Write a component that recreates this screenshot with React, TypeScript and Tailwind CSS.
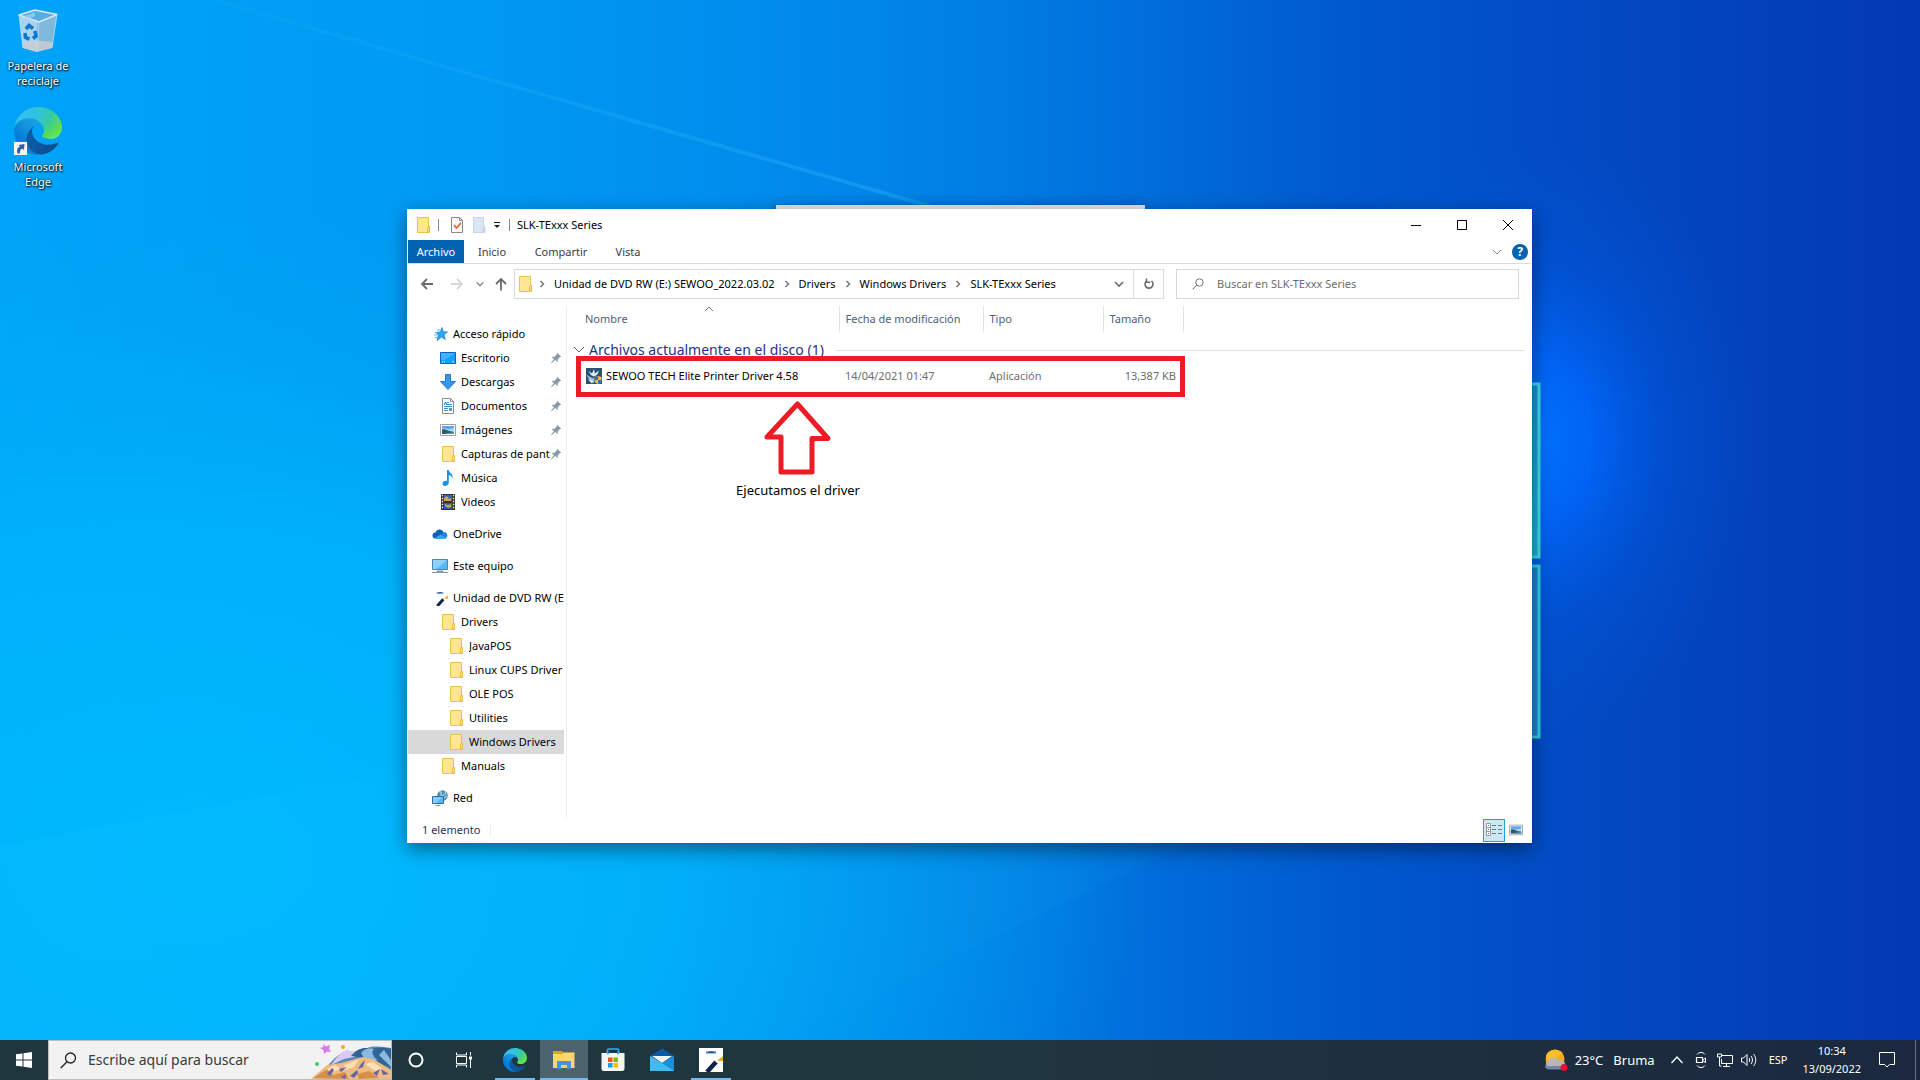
import type { ReactNode } from "react";

type IconProps = { className?: string };

function EdgeIcon({ className = "", id }: IconProps & { id: string }) {
  return (
    <svg viewBox="0 0 256 256" className={className} aria-hidden="true">
      <defs>
        <linearGradient id={`${id}a`} x1="0.25" y1="0.5" x2="1" y2="0.5">
          <stop offset="0" stopColor="#0c59a4" />
          <stop offset="1" stopColor="#114a8b" />
        </linearGradient>
        <linearGradient id={`${id}b`} x1="0.8" y1="0.2" x2="0.2" y2="0.9">
          <stop offset="0" stopColor="#1b9de2" />
          <stop offset="0.3" stopColor="#1595df" />
          <stop offset="0.7" stopColor="#0680d7" />
          <stop offset="1" stopColor="#0078d4" />
        </linearGradient>
        <radialGradient id={`${id}c`} cx="0.1" cy="0.2" r="1.1">
          <stop offset="0" stopColor="#35c1f1" />
          <stop offset="0.35" stopColor="#2fc2df" />
          <stop offset="0.6" stopColor="#36c9a8" />
          <stop offset="0.85" stopColor="#5ddb50" />
          <stop offset="1" stopColor="#66eb6e" />
        </radialGradient>
      </defs>
      <g transform="translate(-4.6 -4.9)">
        <path fill={`url(#${id}a)`} d="M235.7 195.5a93.7 93.7 0 0 1-10.6 4.7 101.9 101.9 0 0 1-35.9 6.4c-47.3 0-88.5-32.5-88.5-74.3a31.5 31.5 0 0 1 16.4-27.3c-42.8 1.8-53.8 46.4-53.8 72.5 0 73.9 68.1 81.4 82.8 81.4 7.9 0 19.8-2.3 27-4.6l1.3-.4a128.3 128.3 0 0 0 66.6-52.8 4 4 0 0 0-5.3-5.6Z" />
        <path fill={`url(#${id}b)`} d="M110.3 246.3A79.2 79.2 0 0 1 87.6 225a80.7 80.7 0 0 1 29.5-120c3.1-1.5 8.5-4.1 15.6-4a32.4 32.4 0 0 1 25.7 13 31.9 31.9 0 0 1 6.3 18.7c0-.2 24.5-79.6-80-79.6-43.9 0-80 41.6-80 78.2a130.2 130.2 0 0 0 12.1 56 128 128 0 0 0 156.4 67.1 75.6 75.6 0 0 1-62.8-8Z" />
        <path fill={`url(#${id}c)`} d="M156.9 153.8c-.8 1-3.3 2.5-3.3 5.6 0 2.6 1.7 5.2 4.8 7.3 14.3 10 41.4 8.6 41.5 8.6a59.6 59.6 0 0 0 30.3-8.3 61.4 61.4 0 0 0 30.4-52.9c.3-22.4-8-37.3-11.3-43.9C228.1 28.8 182.4 4.9 132.6 4.900a128 128 0 0 0-128 126.2c.5-36.5 36.8-66 80-66 3.500 0 23.500.3 42 10 16.300 8.600 24.900 19 30.900 29.300 6.100 10.600 7.200 24.100 7.200 29.500s-2.700 13.300-7.800 19.900Z" />
      </g>
    </svg>
  );
}

function RecycleBinIcon() {
  return (
    <svg viewBox="0 0 40 44" className="h-11 w-10" aria-hidden="true">
      <path d="M1 6 19 12v31L5 39Z" fill="#a9d3ee" />
      <path d="M19 12 39 6l-5 33-15 4Z" fill="#7fb9dc" />
      <path d="m4.500 33 14.500-1.500L35 33l-1 6-15 4L5 39Z" fill="#c9ccd2" opacity=".85" />
      <path d="M1 6 17 1l22 4.500L21 13Z" fill="#58ade0" stroke="#d8e8f2" strokeWidth="1.400" strokeLinejoin="round" />
      <path d="M6 7 17 3.500V7l-6 2.500Z" fill="#8ccaf0" />
      <path d="M1 6 5 39m34-33.500L34 39M21 13l-2 30" stroke="#c9e2f2" strokeWidth=".7" fill="none" />
      <g fill="none" stroke="#0b78d0" strokeWidth="3.600">
        <path d="m8 20 3-3.500 4 3" />
        <path d="m17 22 1 5-3 2.500" />
        <path d="m11.500 30-4-1.500-.5-4.500" />
      </g>
    </svg>
  );
}

function FolderIcon({ className = "h-4 w-4" }: IconProps) {
  return (
    <svg viewBox="0 0 16 16" className={className} aria-hidden="true">
      <path d="M2.500.5h11v9h1v6h-12Z" fill="#ffe693" stroke="#e9c251" />
      <path d="M13 9.500h1.500v5l-2 1v-5Z" fill="#ffe07b" stroke="#e3b23c" strokeWidth=".8" />
    </svg>
  );
}

function PinIcon() {
  return (
    <svg viewBox="0 0 12 12" className="h-3 w-3 shrink-0" aria-hidden="true">
      <path d="m7.200.8 4 4-1.400.5-2 2-.3 3L5.200 8.100 1.500 11.300.8 11.200l3-4-2.200-2.300 2.900-.2 2.200-2.200Z" fill="#8b9aa6" />
    </svg>
  );
}

function StarIcon() {
  return (
    <svg viewBox="0 0 16 16" className="h-4 w-4" aria-hidden="true">
      <path d="m10 1.500 1.300 4.200 4.200.2-3.400 2.900 1.200 4.700-3.900-2.400L5.200 14.500l1-5.400-2-2.500 4-.7Z" fill="#2ea5ee" stroke="#1280cf" strokeWidth=".7" />
      <path d="M3 6.500h2M2 9h3M2.500 11.500h2.500M5 4h3" stroke="#4cb4f0" strokeWidth=".9" />
    </svg>
  );
}

function DesktopIcon() {
  return (
    <svg viewBox="0 0 16 16" className="h-4 w-4" aria-hidden="true">
      <path d="M.5 2.500h15v11H.5Z" fill="#15a0fb" stroke="#0a63b5" />
      <path d="M1 3h14L5 10H1Z" fill="#3eb3ff" />
      <path d="M2 12h1m1 0h1m7 0h2" stroke="#dff2ff" />
    </svg>
  );
}

function DownloadIcon() {
  return (
    <svg viewBox="0 0 16 16" className="h-4 w-4" aria-hidden="true">
      <path d="M5.500.5h5v7h5L8 15.500.5 7.500h5Z" fill="#3a96e8" stroke="#2478c8" />
    </svg>
  );
}

function DocumentIcon() {
  return (
    <svg viewBox="0 0 16 16" className="h-4 w-4" aria-hidden="true">
      <path d="M2.500.5h8l3 3v12h-11Z" fill="#fff" stroke="#888f96" />
      <path d="M10.500.5v3h3" fill="none" stroke="#888f96" />
      <path d="M7 4.500h2M7 6.500h5M4 8.500h8M4 12.500h4M4 10.500h4" stroke="#3f8fcb" />
      <path d="m4 7 1.500-3L7 7" fill="none" stroke="#2475b5" />
      <path d="M9 10h3v3H9Z" fill="#4f9bc9" />
    </svg>
  );
}

function PictureIcon({ className = "h-4 w-4" }: IconProps) {
  return (
    <svg viewBox="0 0 16 16" className={className} aria-hidden="true">
      <path d="M.5 2.500h15v11H.5Z" fill="#fff" stroke="#9aa0a6" />
      <path d="M2 4h12v8H2Z" fill="#a5d3f5" />
      <path d="M2 4h12v2L8 7 2 6Z" fill="#5aa5e8" />
      <path d="M2 7.500c3-1 5 .5 7 1.500l5 1v2H2Z" fill="#2f5d63" />
      <path d="M6 11.500 14 10v2H6Z" fill="#5f93b8" />
    </svg>
  );
}

function MusicIcon() {
  return (
    <svg viewBox="0 0 16 16" className="h-4 w-4" aria-hidden="true">
      <path d="M7 0h1.800c.2 2.800 4.700 3.700 3.700 8.500-.6-2-2-3.200-3.700-3.500V12.500c0 4-6.300 4.600-6.300 1.200 0-2.500 2.800-3.500 4.500-2.700Z" fill="#1593ec" />
    </svg>
  );
}

function VideoIcon() {
  return (
    <svg viewBox="0 0 16 16" className="h-4 w-4" aria-hidden="true">
      <path d="M1 0h14v16H1Z" fill="#333" />
      <path d="M4 1h8v6H4Z" fill="#3b61c9" />
      <path d="M4 9h8v6H4Z" fill="#3156bd" />
      <path d="m4 4 3-2 2 3 2-1v3H4Z" fill="#cfaa35" />
      <path d="m5 10 3 1 3-1v3l-3 1-3-2Z" fill="#c9a540" />
      <path d="M2.500.8v15M13.500.8v15" stroke="#eee" strokeWidth="1.300" strokeDasharray="1.500 1.500" />
    </svg>
  );
}

function CloudIcon() {
  return (
    <svg viewBox="0 0 16 16" className="h-4 w-4" aria-hidden="true">
      <path d="M3.500 6.500a4.300 4.300 0 0 1 8-.5L9 12.500H3.500a3 3 0 0 1 0-6Z" fill="#0f5fb8" />
      <path d="M5 12.500 12 6a3.300 3.300 0 0 1 .8 6.500Z" fill="#1687dc" />
      <path d="m2.500 12.300 6-3.800 6 3.500c-.5.500-1.200.9-1.700.9H4c-.5 0-1.100-.2-1.500-.6Z" fill="#35a8ee" />
    </svg>
  );
}

function ComputerIcon() {
  return (
    <svg viewBox="0 0 16 16" className="h-4 w-4" aria-hidden="true">
      <path d="M.5 1.500h15v10H.5Z" fill="#56b9f7" stroke="#4d87ae" />
      <path d="M1 2h14L4 11H1Z" fill="#8ed2fb" />
      <path d="M5 13h6v1H5ZM0 14.500h16" stroke="#8b98a8" fill="#8b98a8" />
    </svg>
  );
}

function SewooIcon({ className = "h-4 w-4" }: IconProps) {
  return (
    <svg viewBox="0 0 24 24" className={className} aria-hidden="true">
      <path d="M7 4.500h10" stroke="#3d7bc4" strokeWidth="2" />
      <path d="M9.500 4h5" stroke="#12294f" strokeWidth="1" />
      <path d="m8 24 9-10" stroke="#0e2447" strokeWidth="4.500" />
      <path d="m18 13 6-5v5Z" fill="#f5a81c" />
    </svg>
  );
}

function NetworkPlaceIcon() {
  return (
    <svg viewBox="0 0 16 16" className="h-4 w-4" aria-hidden="true">
      <circle cx="10.500" cy="5.500" r="5.300" fill="#4f8fae" />
      <path d="M7 2c2-1 3 1 2 2s1 2 3 1 2-3 1-4M12 8l3-2" stroke="#a5d0df" strokeWidth="1.300" fill="none" />
      <path d="M.5 6.500h11v7H.5Z" fill="#55b8f5" stroke="#2f6c96" />
      <path d="M1 7h9l-6 6H1Z" fill="#84cffb" />
      <path d="M3.500 15.500h5" stroke="#8090a0" />
    </svg>
  );
}

function InstallerIcon() {
  return (
    <svg viewBox="0 0 16 16" className="h-4 w-4 shrink-0" aria-hidden="true">
      <path d="M0 0h16v16H0Z" fill="#2c4f74" />
      <path d="M2.500 3 6 5.500 8 1l.8 4.500L13 2.500 11 7 7.500 8.500 5 7Z" fill="#e3edf4" />
      <path d="M.5 6.500 4 9l4 1.500V15l-3.500-1Z" fill="#a9c3d6" />
      <path d="M2 11.500 7 13l-1 2.500Z" fill="#edf3f7" />
      <path d="M8.500 9 12 8l3.500 1v3.500c0 1.700-2 3-3.500 3.500-1.500-.5-3.500-1.800-3.500-3.500Z" fill="#f2c12e" />
      <path d="M8.500 9 12 8v4H8.500ZM12 12h3.500c0 2-2 3.500-3.500 4Z" fill="#2d6fd1" />
    </svg>
  );
}

function Chevron({ className = "h-2 w-1.5" }: IconProps) {
  return (
    <svg viewBox="0 0 6 8" className={className} aria-hidden="true">
      <path d="m1.500 1 3 3-3 3" fill="none" stroke="#777" strokeWidth="1.500" />
    </svg>
  );
}

function ChevronDown({ className = "h-2 w-3 text-[#6b6b6b]" }: IconProps) {
  return (
    <svg viewBox="0 0 12 8" className={className} aria-hidden="true">
      <path d="m2 2 4 4 4-4" fill="none" stroke="currentColor" strokeWidth="1.700" />
    </svg>
  );
}

function Wallpaper() {
  return (
    <svg viewBox="0 0 1920 1080" preserveAspectRatio="none" className="absolute inset-0 h-full w-full" aria-hidden="true">
      <defs>
        <linearGradient id="sky" x1="0" y1="0" x2="1" y2="0">
          <stop offset="0" stopColor="#00a4f8" />
          <stop offset=".25" stopColor="#0099f3" />
          <stop offset=".4" stopColor="#008cec" />
          <stop offset=".52" stopColor="#007de3" />
          <stop offset=".62" stopColor="#0069d8" />
          <stop offset=".7" stopColor="#0059ce" />
          <stop offset=".8" stopColor="#024cc5" />
          <stop offset="1" stopColor="#0339b3" />
        </linearGradient>
        <radialGradient id="cyan" gradientUnits="userSpaceOnUse" cx="0" cy="0" r="1" gradientTransform="translate(200 860) scale(950 650)">
          <stop offset="0" stopColor="#00b9ff" />
          <stop offset=".5" stopColor="#00b5fc" stopOpacity=".8" />
          <stop offset="1" stopColor="#00a8f5" stopOpacity="0" />
        </radialGradient>
        <radialGradient id="glow" gradientUnits="userSpaceOnUse" cx="0" cy="0" r="1" gradientTransform="translate(1530 440) scale(230 300)">
          <stop offset="0" stopColor="#0073ff" />
          <stop offset=".28" stopColor="#0067fb" stopOpacity=".85" />
          <stop offset=".6" stopColor="#005ce6" stopOpacity=".35" />
          <stop offset="1" stopColor="#0058d8" stopOpacity="0" />
        </radialGradient>
        <linearGradient id="beam" x1="0" y1="0" x2="1" y2="0">
          <stop offset="0" stopColor="#37bbff" stopOpacity=".1" />
          <stop offset="1" stopColor="#37bbff" stopOpacity=".6" />
        </linearGradient>
        <linearGradient id="lowBeam" x1="0" y1="0" x2="1" y2="0">
          <stop offset="0" stopColor="#19c3ff" stopOpacity=".15" />
          <stop offset="1" stopColor="#19c3ff" stopOpacity="0" />
        </linearGradient>
        <linearGradient id="pane" x1="0" y1="0" x2="0" y2="1">
          <stop offset="0" stopColor="#1a90d8" />
          <stop offset="1" stopColor="#1fb0d8" />
        </linearGradient>
      </defs>
      <path d="M0 0h1920v1080H0Z" fill="url(#sky)" />
      <path d="M0 0h1920v1080H0Z" fill="url(#cyan)" />
      <path d="M0 0h1920v1080H0Z" fill="url(#glow)" />
      <path d="M208 0h12l716 206h-14Z" fill="url(#beam)" opacity=".6" />
      <path d="M0 846 900 678v402H0Z" fill="url(#lowBeam)" />
      <path d="M700 1080 1190 843h-500Z" fill="#15a9f5" opacity=".08" />
      <path d="M1500 384h39v173h-39Z" fill="url(#pane)" stroke="#3bdde8" strokeWidth="3" />
      <path d="M1500 566h39v171h-39Z" fill="#1985d6" stroke="#2fd0e4" strokeWidth="3" />
    </svg>
  );
}

function DesktopShortcut({ label, children }: { label: string; children: ReactNode }) {
  return (
    <button className="flex w-[76px] flex-col items-center gap-1 text-center text-[11px] leading-[15px] text-white [text-shadow:1px_1px_2px_#000,0_0_2px_#000]">
      {children}
      <span className="w-[68px]">{label}</span>
    </button>
  );
}

type TreeItem = { label: string; icon: ReactNode; level: number; pinned?: boolean; selected?: boolean };

const tree: TreeItem[][] = [
  [
    { label: "Acceso rápido", icon: <StarIcon />, level: 0 },
    { label: "Escritorio", icon: <DesktopIcon />, level: 1, pinned: true },
    { label: "Descargas", icon: <DownloadIcon />, level: 1, pinned: true },
    { label: "Documentos", icon: <DocumentIcon />, level: 1, pinned: true },
    { label: "Imágenes", icon: <PictureIcon />, level: 1, pinned: true },
    { label: "Capturas de pantalla", icon: <FolderIcon />, level: 1, pinned: true },
    { label: "Música", icon: <MusicIcon />, level: 1 },
    { label: "Videos", icon: <VideoIcon />, level: 1 },
  ],
  [{ label: "OneDrive", icon: <CloudIcon />, level: 0 }],
  [{ label: "Este equipo", icon: <ComputerIcon />, level: 0 }],
  [
    { label: "Unidad de DVD RW (E:)", icon: <SewooIcon />, level: 0 },
    { label: "Drivers", icon: <FolderIcon />, level: 1 },
    { label: "JavaPOS", icon: <FolderIcon />, level: 2 },
    { label: "Linux CUPS Driver", icon: <FolderIcon />, level: 2 },
    { label: "OLE POS", icon: <FolderIcon />, level: 2 },
    { label: "Utilities", icon: <FolderIcon />, level: 2 },
    { label: "Windows Drivers", icon: <FolderIcon />, level: 2, selected: true },
    { label: "Manuals", icon: <FolderIcon />, level: 1 },
  ],
  [{ label: "Red", icon: <NetworkPlaceIcon />, level: 0 }],
];

const indent = ["pl-6", "pl-8", "pl-10"];

function NavTree() {
  return (
    <nav className="flex w-[159px] shrink-0 flex-col gap-2 border-r border-[#f0f0f0] pt-4 pb-2">
      {tree.map((group) => (
        <ul key={group[0].label}>
          {group.map((item) => (
            <li key={item.label} className="pr-0.5">
              <button className={`flex h-6 w-full items-center text-left ${indent[item.level]} ${item.selected ? "bg-[#d9d9d9]" : ""} ${item.pinned ? "pr-0.5" : ""}`}>
                <span className="mr-[5px] shrink-0">{item.icon}</span>
                <span className="min-w-0 flex-1 overflow-hidden whitespace-nowrap">{item.label}</span>
                {item.pinned && <PinIcon />}
              </button>
            </li>
          ))}
        </ul>
      ))}
    </nav>
  );
}

function TitleBar() {
  return (
    <header className="flex h-[31px] items-center">
      <div className="flex flex-1 items-center pl-[7px]">
        <FolderIcon className="h-4 w-4" />
        <span className="ml-[7px] h-3 w-px bg-[#8a8a8a]" />
        <button aria-label="Propiedades" className="ml-2.5">
          <svg viewBox="0 0 16 16" className="h-4 w-4">
            <path d="M2.500.5h8l3 3v12h-11Z" fill="#fafafa" stroke="#888" />
            <path d="M10.500.5v3h3" fill="none" stroke="#888" />
            <path d="m5 8 2.500 3L12 6" fill="none" stroke="#e8622c" strokeWidth="1.800" />
          </svg>
        </button>
        <button aria-label="Nueva carpeta" className="ml-1.5">
          <svg viewBox="0 0 16 16" className="h-4 w-4">
            <path d="M2.500.5h10v9h1v6h-11Z" fill="#dde6f5" stroke="#c9d5ea" />
            <path d="M12 10h2v5h-2Z" fill="#d4dff0" stroke="#c0cee6" strokeWidth=".8" />
          </svg>
        </button>
        <button aria-label="Personalizar barra de acceso rápido" className="ml-1.5">
          <svg viewBox="0 0 8 8" className="h-2 w-2">
            <path d="M1 1.500h6" stroke="#222" />
            <path d="m1 4 3 3 3-3Z" fill="#222" />
          </svg>
        </button>
        <span className="ml-2 h-3 w-px bg-[#8a8a8a]" />
        <h1 className="ml-[7px]">SLK-TExxx Series</h1>
      </div>
      <button aria-label="Minimizar" className="flex h-full w-[46px] items-center justify-center">
        <svg viewBox="0 0 10 10" className="h-2.5 w-2.5"><path d="M0 5.500h10" stroke="#000" /></svg>
      </button>
      <button aria-label="Maximizar" className="flex h-full w-[46px] items-center justify-center">
        <svg viewBox="0 0 10 10" className="h-2.5 w-2.5"><path d="M.5.5h9v9h-9Z" stroke="#000" fill="none" /></svg>
      </button>
      <button aria-label="Cerrar" className="flex h-full w-[46px] items-center justify-center">
        <svg viewBox="0 0 10 10" className="h-2.5 w-2.5"><path d="m0 0 10 10M10 0 0 10" stroke="#000" /></svg>
      </button>
    </header>
  );
}

function Ribbon() {
  return (
    <div className="flex h-6 border-b border-[#dadbdc] text-[#3b3b3b]">
      <button className="w-14 bg-[#0063b1] text-white">Archivo</button>
      <button className="w-14">Inicio</button>
      <button className="w-[82px]">Compartir</button>
      <button className="w-[52px]">Vista</button>
      <div className="ml-auto flex items-center gap-2.5 pr-[3px]">
        <button aria-label="Expandir la cinta">
          <svg viewBox="0 0 10 8" className="h-2 w-2.5"><path d="m1 2 4 4 4-4" fill="none" stroke="#8a8a8a" /></svg>
        </button>
        <button aria-label="Ayuda" className="h-4 w-4 rounded-full bg-[#0063b1] text-xs leading-4 font-bold text-white">?</button>
      </div>
    </div>
  );
}

const crumbs = ["Unidad de DVD RW (E:) SEWOO_2022.03.02", "Drivers", "Windows Drivers", "SLK-TExxx Series"];

function ArrowIcon({ d, color }: { d: string; color: string }) {
  return (
    <svg viewBox="0 0 14 12" className="h-3 w-3.5" aria-hidden="true">
      <path d={d} fill="none" stroke={color} strokeWidth="1.800" />
    </svg>
  );
}

function AddressBar() {
  return (
    <div className="flex items-center pt-[5px] pr-3 pb-[7px] pl-3">
      <button aria-label="Atrás"><ArrowIcon d="M13 6H2M7 1 2 6l5 5" color="#6b6b6b" /></button>
      <button aria-label="Adelante" className="ml-4"><ArrowIcon d="M1 6h11M7 1l5 5-5 5" color="#d5d5d5" /></button>
      <button aria-label="Ubicaciones recientes" className="ml-[11px]">
        <ChevronDown className="h-2 w-2.5 text-[#8a8a8a]" />
      </button>
      <button aria-label="Subir" className="ml-2.5">
        <svg viewBox="0 0 12 14" className="h-3.5 w-3"><path d="M6 13.500V2M1 7l5-5 5 5" fill="none" stroke="#6b6b6b" strokeWidth="1.800" /></svg>
      </button>
      <div className="ml-[7px] flex h-[30px] min-w-0 flex-1 items-center border border-[#d9d9d9] pl-[2px]">
        <FolderIcon className="h-4 w-4 shrink-0" />
        <ol className="flex flex-1 items-center whitespace-nowrap">
          {crumbs.map((crumb, i) => (
            <li key={crumb} className="flex items-center">
              <Chevron className={`mr-[9px] h-2 w-1.5 ${i === 0 ? "ml-1.5" : "ml-[9px]"}`} />
              <a href="#" className="text-black">{crumb}</a>
            </li>
          ))}
        </ol>
        <button aria-label="Ubicaciones anteriores" className="mr-2"><ChevronDown /></button>
        <button aria-label="Actualizar" className="flex h-full w-[30px] items-center justify-center border-l border-[#d9d9d9]">
          <svg viewBox="0 0 12 12" className="h-3 w-3">
            <path d="M8.500 3A4 4 0 1 1 3.500 3" fill="none" stroke="#6b6b6b" strokeWidth="1.600" />
            <path d="M3.500.5v3.800h3.800" fill="none" stroke="#6b6b6b" strokeWidth="1.500" />
          </svg>
        </button>
      </div>
      <label className="ml-3 flex h-[30px] w-[343px] items-center border border-[#d9d9d9] pl-[15px]">
        <svg viewBox="0 0 12 12" className="h-3 w-3 shrink-0" aria-hidden="true">
          <circle cx="7.500" cy="4.500" r="3.700" fill="none" stroke="#777" />
          <path d="m5 7-4.500 4.500" stroke="#777" />
        </svg>
        <input
          aria-label="Buscar"
          placeholder="Buscar en SLK-TExxx Series"
          className="ml-[13px] min-w-0 flex-1 bg-transparent outline-none placeholder:text-[#6d6d6d]"
        />
      </label>
    </div>
  );
}

function FileList() {
  return (
    <main className="relative min-w-0 flex-1 pr-[7px]">
      <table className="w-full table-fixed border-collapse text-left">
        <colgroup>
          <col className="w-[272px]" />
          <col className="w-36" />
          <col className="w-[120px]" />
          <col className="w-20" />
          <col />
        </colgroup>
        <thead>
          <tr className="h-[26px] text-[#4c607a] [&>th]:border-r [&>th]:border-[#e5e5e5] [&>th]:font-normal">
            <th scope="col" className="relative pl-[18px]">
              Nombre
              <svg viewBox="0 0 10 6" className="absolute top-0 left-[137px] h-1.5 w-2.5" aria-hidden="true">
                <path d="m1 5 4-4 4 4" fill="none" stroke="#777" />
              </svg>
            </th>
            <th scope="col" className="pl-1.5">Fecha de modificación</th>
            <th scope="col" className="pl-1.5">Tipo</th>
            <th scope="col" className="pl-1.5">Tamaño</th>
            <td />
          </tr>
        </thead>
        <tbody>
          <tr>
            <th colSpan={5} scope="rowgroup" className="pt-1.5 pl-1.5 font-normal">
              <div className="flex h-6 items-center text-sm text-[#1e3287]">
                <button aria-label="Contraer grupo">
                  <svg viewBox="0 0 12 8" className="h-2 w-3"><path d="m1 1 5 5 5-5" fill="none" stroke="#666" /></svg>
                </button>
                <span className="ml-1">Archivos actualmente en el disco (1)</span>
                <span className="ml-3 h-px flex-1 bg-[#e2e2e2]" />
              </div>
            </th>
          </tr>
          <tr className="h-7 text-[#6d6d6d]">
            <td className="pl-[19px]">
              <a href="#" className="flex items-center gap-1 text-black"><InstallerIcon />SEWOO TECH Elite Printer Driver 4.58</a>
            </td>
            <td className="pl-1.5">14/04/2021 01:47</td>
            <td className="pl-1.5">Aplicación</td>
            <td className="pr-[7px] text-right">13,387 KB</td>
            <td />
          </tr>
        </tbody>
      </table>
      <div className="pointer-events-none absolute top-[50px] left-[9px] flex w-[609px] flex-col">
        <div className="h-[41px] border-[5px] border-[#ed1c24]" />
        <figure className="ml-[158px] flex w-32 flex-col items-center pt-[3px]">
          <svg viewBox="0 0 68 76" className="h-[76px] w-[68px]" aria-hidden="true">
            <path d="M33.500 4 64 38.500H48V72H17V37H3Z" fill="none" stroke="#ed1c24" strokeWidth="5" strokeLinejoin="round" />
          </svg>
          <figcaption className="mt-1 text-[13px] leading-5 whitespace-nowrap text-black">Ejecutamos el driver</figcaption>
        </figure>
      </div>
    </main>
  );
}

function StatusBar() {
  return (
    <footer className="flex h-6 items-center pr-2 pl-[14px] text-[#1f3558]">
      <span>1 elemento</span>
      <span className="ml-2.5 h-3 w-px bg-[#ededed]" />
      <button aria-label="Vista de detalles" className="ml-auto flex h-[23px] w-[22px] items-center justify-center border border-[#26a0da] bg-[#cce8f6]">
        <svg viewBox="0 0 16 14" className="h-3.5 w-4">
          <path d="M.5.5h4v12h-4ZM.5 4.500h4M.5 8.500h4" fill="#fff" stroke="#999" />
          <path d="M2 2h1v1H2Z" fill="#3a7d44" />
          <path d="M2 6h1v1H2Z" fill="#1f7fd1" />
          <path d="M2 10h1v1H2Z" fill="#d13438" />
          <path d="M6 2.500h4m2 0h4M6 6.500h4m2 0h4M6 10.500h4m2 0h4" stroke="#777" />
        </svg>
      </button>
      <button aria-label="Vista de iconos grandes" className="ml-1"><PictureIcon className="h-3.5 w-3.5" /></button>
    </footer>
  );
}

function ExplorerWindow() {
  return (
    <section
      aria-label="SLK-TExxx Series"
      className="absolute top-[209px] left-[407px] flex w-[1125px] flex-col border-x border-b border-white bg-white shadow-[0_6px_18px_rgba(0,0,0,0.45)]"
    >
      <TitleBar />
      <Ribbon />
      <AddressBar />
      <div className="flex">
        <NavTree />
        <FileList />
      </div>
      <StatusBar />
    </section>
  );
}

function SearchArt() {
  return (
    <svg viewBox="0 0 80 38" className="h-[38px] w-20" aria-hidden="true">
      <path d="M8 34C20 22 24 14 34 11c8 3 14-5 22-4 8-3 16-1 24 0v31H4Z" fill="#5b86b8" />
      <path d="M20 24c6-8 10-14 17-15 4 2 8 1 12 1l-6 6-10 2Z" fill="#d9c8f3" />
      <path d="M40 15c6-7 11-8 17-8-4 4-4 7-1 10ZM60 8c8-2 14-1 20 0v19l-14-6Z" fill="#2e6496" />
      <path d="M50 12c4-5 9-5 13-4-3 3-2 8 4 11l-12 1ZM68 14l5-5 7 10v7Z" fill="#8db9dd" />
      <path d="M0 38 16 24l14-2 22-6 12 3 16 10v9Z" fill="#eebb83" />
      <path d="m14 29 10-5 6 4-9 3ZM34 24l14-6-5 8-12 4ZM54 23l8-2 10 7-8 2Z" fill="#ffdfb8" />
      <path d="m2 37 14-9 6 6 12-3 4 7ZM46 33l12-3 10 7-20 1Z" fill="#d98f4a" />
      <path d="m16 33 5-6 2 2-4 6ZM28 28l8-2-6 5ZM39 35l7-6 1 3-4 5ZM50 23l4-4-2 7-5 2ZM62 32l7-4-3 7ZM70 28l8 5-6 1ZM30 36l5-3-1 5Z" fill="#6a63a5" />
      <path d="m12 3 3 2.500L19 4l-1 4 2 3-4-.5L13 13l-.5-4L9 7l3.500-1Z" fill="#d678f0" />
      <circle cx="32" cy="6" r="2" fill="#f8a90f" />
      <circle cx="6" cy="23" r="2" fill="#3ecb6a" />
    </svg>
  );
}

function TaskButton({ label, children, open, active }: { label: string; children: ReactNode; open?: boolean; active?: boolean }) {
  return (
    <button
      aria-label={label}
      className={`relative mr-px flex h-full w-12 items-center justify-center ${active ? "bg-[#4c626c]" : ""}`}
    >
      {children}
      {open && <span className={`absolute bottom-0 h-0.5 bg-[#76b9ed] ${active ? "w-12" : "w-10"}`} />}
    </button>
  );
}

function Taskbar() {
  return (
    <footer className="relative mt-auto flex h-10 items-stretch bg-linear-to-r from-[#1f363f] via-[#20363f] to-[#1b283f] text-white">
      <button aria-label="Inicio" className="flex w-12 items-center justify-center">
        <svg viewBox="0 0 16 16" className="h-4 w-4">
          <path d="M0 2.300 6.500 1.400v6.100H0ZM7.500 1.200 16 0v7.500H7.500ZM0 8.500h6.500v6.100L0 13.700ZM7.500 8.500H16V16l-8.500-1.200Z" fill="#fff" />
        </svg>
      </button>
      <label className="flex w-[344px] items-center border border-[#b9bdc0] bg-[#f2f2f2] pl-[11px] text-[#333]">
        <svg viewBox="0 0 17 17" className="h-[17px] w-[17px] shrink-0" aria-hidden="true">
          <circle cx="10.500" cy="6" r="5" fill="none" stroke="#222" strokeWidth="1.300" />
          <path d="M7 9.800.8 16" stroke="#222" strokeWidth="1.300" />
        </svg>
        <input aria-label="Buscar en Windows" placeholder="Escribe aquí para buscar" className="ml-[11px] min-w-0 flex-1 bg-transparent text-sm outline-none placeholder:text-[#3a3a3a]" />
        <SearchArt />
      </label>
      <button aria-label="Cortana" className="flex w-12 items-center justify-center">
        <svg viewBox="0 0 16 16" className="h-4 w-4"><circle cx="8" cy="8" r="6.500" fill="none" stroke="#fff" strokeWidth="2" /></svg>
      </button>
      <button aria-label="Vista de tareas" className="mr-[3px] flex w-12 items-center justify-center">
        <svg viewBox="0 0 16 16" className="h-4 w-4">
          <path d="M.5.5V3h10V.5M.5 15.500V13h10v2.500M.5 4.500h10v7H.5Z" fill="none" stroke="#fff" />
          <path d="M14.500 0v3.500m0 4V16" stroke="#fff" />
          <path d="M13 4.500h3v3h-3Z" fill="#fff" />
        </svg>
      </button>
      <TaskButton label="Microsoft Edge" open><EdgeIcon id="edgeBar" className="h-6 w-6" /></TaskButton>
      <TaskButton label="Explorador de archivos" open active>
        <svg viewBox="0 0 22 18" className="h-[18px] w-[22px]">
          <path d="M0 0h9l1.500 1.500V5H0Z" fill="#e2a10f" />
          <path d="M0 3h9l1.500-1.500H21.500V17H0Z" fill="#ffd868" />
          <path d="M4 10h14v8h-4v-4H8v4H4Z" fill="#3f97dc" />
          <path d="M8 14h6v3H8Z" fill="#ffcf4d" />
        </svg>
      </TaskButton>
      <TaskButton label="Microsoft Store">
        <svg viewBox="0 0 24 24" className="h-6 w-6">
          <path d="M6.500 6V2c0-.6.400-1 1-1h9c.6 0 1 .4 1 1v4" fill="none" stroke="#27b0ee" strokeWidth="1.600" />
          <path d="M.5 5h23v15.500a2.500 2.500 0 0 1-2.500 2.500H3a2.500 2.500 0 0 1-2.500-2.500Z" fill="#f5f5f5" />
          <path d="M6.500 5V3M17.500 5V3M6 5.500h2M16 5.500h2" stroke="#27b0ee" strokeWidth="1.600" />
          <path d="M7 9.500h4.500V14H7Z" fill="#f25022" />
          <path d="M12.500 9.500H17V14h-4.500Z" fill="#7fba00" />
          <path d="M7 15h4.500v4.500H7Z" fill="#00a4ef" />
          <path d="M12.500 15H17v4.500h-4.500Z" fill="#ffb900" />
        </svg>
      </TaskButton>
      <TaskButton label="Correo">
        <svg viewBox="0 0 24 24" className="h-6 w-6">
          <path d="M0 8 12 .5 24 8v4H0Z" fill="#0c5ba8" />
          <path d="M2 8h20L12 15Z" fill="#f4f4f4" />
          <path d="m0 8 12 7 12-7v15H0Z" fill="#27a9ea" />
          <path d="m24 8-12 7 12 8Z" fill="#1b8edb" />
          <path d="M0 23V8l24 15Z" fill="#3fbdf3" />
        </svg>
      </TaskButton>
      <TaskButton label="SEWOO" open>
        <span className="bg-white"><SewooIcon className="h-6 w-6" /></span>
      </TaskButton>

      <div className="ml-auto flex items-center">
        <button className="flex items-center text-[13px]">
          <svg viewBox="0 0 24 22" className="h-[22px] w-6" aria-hidden="true">
            <circle cx="11" cy="10" r="9.500" fill="#fba919" />
            <path d="M2 7a9.500 9.500 0 0 1 16-3L6 16Z" fill="#fdbf22" />
            <path d="M4 12h13v6H4Z" fill="#e5b184" />
            <path d="M5 20a4.500 4.500 0 0 1-.5-8.500A6 6 0 0 1 15 11a4.500 4.500 0 0 1 3 9Z" fill="#b3b7c0" opacity=".85" />
            <path d="M1 17h18c0 2-1 3.500-3 3.500H5c-2.500 0-4-1.500-4-3.500Z" fill="#7386a3" />
            <circle cx="20" cy="18.500" r="3.500" fill="#e81132" />
          </svg>
          <span className="ml-[7px]">23°C</span>
          <span className="ml-2.5">Bruma</span>
        </button>
        <button aria-label="Mostrar iconos ocultos" className="ml-4">
          <svg viewBox="0 0 12 8" className="h-2 w-3"><path d="m.5 7 5.500-6 5.500 6" fill="none" stroke="#fff" strokeWidth="1.300" /></svg>
        </button>
        <button aria-label="Reunirse ahora" className="ml-3">
          <svg viewBox="0 0 12 16" className="h-4 w-3">
            <path d="M1.500 5.500h6v5h-6Z" fill="none" stroke="#fff" strokeWidth="1.200" />
            <path d="m7.500 8 3-2v4.500l-3-2M2 2.500C4-.2 8-.2 10 2.500M2 13.500c2 2.700 6 2.700 8 0" fill="none" stroke="#fff" />
          </svg>
        </button>
        <button aria-label="Red" className="ml-2.5">
          <svg viewBox="0 0 16 14" className="h-3.5 w-4">
            <path d="M5 2.500h10.500v8H4.500V6M6 13.500h7M9.500 10.500v3" fill="none" stroke="#fff" />
            <path d="M.5 1h4v3h-4ZM2.500 4v9h2" fill="#1b283f" stroke="#fff" />
          </svg>
        </button>
        <button aria-label="Volumen" className="ml-2">
          <svg viewBox="0 0 16 14" className="h-3.5 w-4">
            <path d="M.5 5h2L6 1.500v11L2.500 9h-2ZM8 5c1 1.300 1 2.700 0 4M10 3c2 2.500 2 5.500 0 8M12.500 1c3 3.500 3 8.500 0 12" fill="none" stroke="#fff" />
          </svg>
        </button>
        <button className="ml-3 text-[11px]">ESP</button>
        <button className="ml-[15px] flex flex-col items-center text-[11px] leading-[18px]">
          <span>10:34</span>
          <span>13/09/2022</span>
        </button>
        <button aria-label="Notificaciones" className="ml-[18px]">
          <svg viewBox="0 0 16 16" className="h-4 w-4"><path d="M.5.5h15v12h-5L8 15l-2.500-2.500h-5Z" fill="none" stroke="#fff" /></svg>
        </button>
        <button aria-label="Mostrar escritorio" className="ml-5 h-10 w-[5px] border-l border-[#6a7488]" />
      </div>
    </footer>
  );
}

export default function App() {
  return (
    <div className="relative flex h-screen min-h-[880px] flex-col overflow-hidden bg-[#0090ee] font-['Noto_Sans',sans-serif] text-[11px] leading-4 text-black">
      <Wallpaper />
      <div className="relative flex-1">
        <div className="flex w-[76px] flex-col gap-[19px] pt-2">
          <DesktopShortcut label="Papelera de reciclaje">
            <span className="flex h-[46px] items-center"><RecycleBinIcon /></span>
          </DesktopShortcut>
          <DesktopShortcut label="Microsoft Edge">
            <span className="relative">
              <EdgeIcon id="edgeDesk" className="h-12 w-12" />
              <svg viewBox="0 0 13 13" className="absolute bottom-0 left-0 h-[13px] w-[13px]" aria-hidden="true">
                <path d="M0 0h13v13H0Z" fill="#f5f5f5" />
                <path d="M3.500 11.500c-1-4 0-6 2.500-7L4.500 3l6-1-.5 6-1.500-1.500c-2 1-3 2.500-2.500 5Z" fill="#2b5fa8" />
              </svg>
            </span>
          </DesktopShortcut>
        </div>
        <div className="absolute top-[205px] left-[776px] h-20 w-[369px] bg-[#e4e4e4] shadow-[0_2px_12px_rgba(0,0,0,0.4)]" />
        <ExplorerWindow />
      </div>
      <Taskbar />
    </div>
  );
}
